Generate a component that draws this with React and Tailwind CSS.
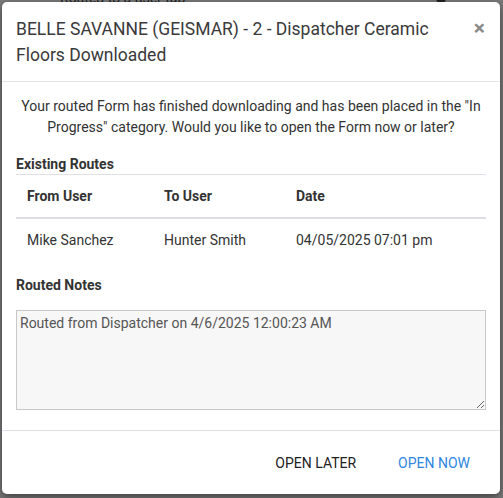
const routes = [
  { from: "Mike Sanchez", to: "Hunter Smith", date: "04/05/2025 07:01 pm" },
];

const App = () => {
  return (
    <div className="relative h-[498px] w-[503px] overflow-hidden bg-[#7a7a7a] font-['Roboto',sans-serif]">
      {/* page behind the overlay */}
      <div className="absolute left-[60px] top-[-12px] text-sm text-[#222]">Routed to a user tab</div>
      <div className="absolute left-[436px] top-[-6px] h-[9px] w-[10px] rounded-full bg-[#222]" />

      <div className="absolute left-[2px] top-[2px] w-[498px] flex flex-col rounded-[5px] bg-white shadow-[0_3px_9px_rgba(0,0,0,0.5)]">
        {/* header */}
        <div className="flex items-start border-b border-[#e5e5e5] px-[14px] pt-[14px] pb-[13px]">
          <h4 className="flex-1 text-[17.5px] leading-[26px] text-[#3a3a3a]">
            BELLE SAVANNE (GEISMAR) - 2 - Dispatcher Ceramic Floors Downloaded
          </h4>
          <button className="ml-4 mt-[2px] mr-[1px] text-[21px] font-bold leading-none text-[#8a8a8a]">
            ×
          </button>
        </div>

        {/* body */}
        <div className="px-[14px] pt-[14px]">
          <p className="text-center text-sm leading-[21px] text-[#333]">
            Your routed Form has finished downloading and has been placed in the "In Progress" category. Would you like to open the Form now or later?
          </p>

          <div className="mt-[16px] border-b border-[#e0e0e8] text-sm font-bold text-[#333]">
            Existing Routes
          </div>
          <table className="w-full text-sm text-[#333]">
            <thead>
              <tr className="border-b-2 border-[#dcdde2]">
                <th className="w-[137px] px-[11px] py-[11px] text-left font-bold">From User</th>
                <th className="w-[132px] px-[11px] py-[11px] text-left font-bold">To User</th>
                <th className="px-[11px] py-[11px] text-left font-bold">Date</th>
              </tr>
            </thead>
            <tbody>
              {routes.map((route) => (
                <tr key={route.date}>
                  <td className="px-[11px] py-[11px]">{route.from}</td>
                  <td className="px-[11px] py-[11px]">{route.to}</td>
                  <td className="px-[11px] py-[11px]">{route.date}</td>
                </tr>
              ))}
            </tbody>
          </table>

          <div className="mt-[14px] text-sm font-bold text-[#333]">Routed Notes</div>
          <textarea
            readOnly
            className="mt-[15px] block h-[100px] w-full resize-y border border-[#c8c8c8] bg-[#f7f7f7] px-[3px] py-[2px] text-sm text-[#555] outline-none"
            defaultValue="Routed from Dispatcher on 4/6/2025 12:00:23 AM"
          />
        </div>

        {/* footer */}
        <div className="mt-[20px] flex h-[64px] items-center justify-end gap-[14px] border-t border-[#e0e0e8] pr-[16px]">
          <button className="px-[14px] py-[6px] text-sm text-[#222]">OPEN LATER</button>
          <button className="px-[14px] py-[6px] text-sm text-[#2e86de]">OPEN NOW</button>
        </div>
      </div>
    </div>
  );
};

export default App;
